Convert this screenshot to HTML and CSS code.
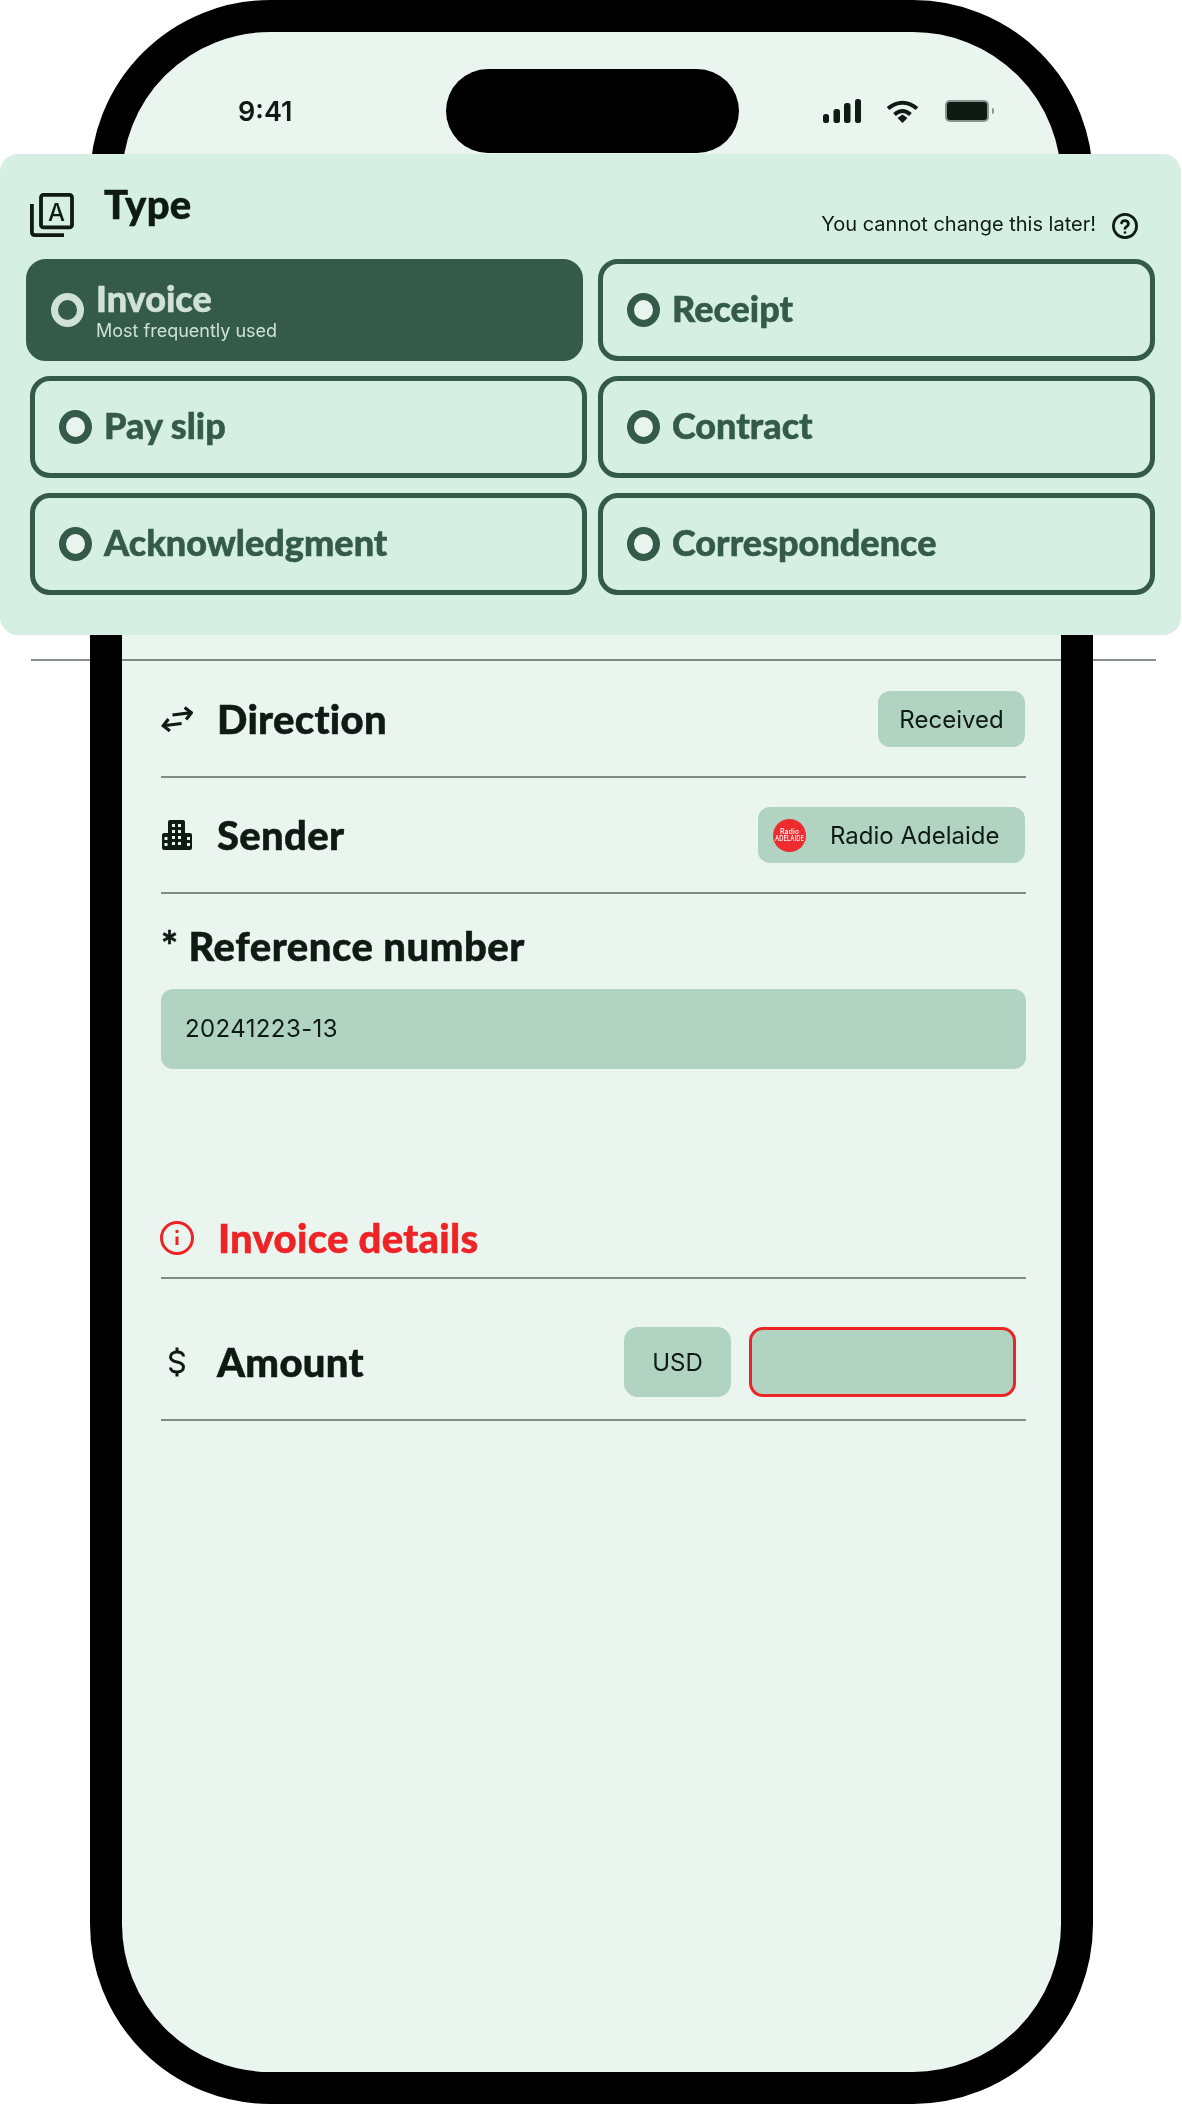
FILE: index.html
```html
<!DOCTYPE html>
<html lang="en">
<head>
    <meta charset="UTF-8">
    <meta name="viewport" content="width=device-width, initial-scale=1.0">
    <title>New document</title>
    <link rel="stylesheet" href="styles.css">
</head>
<body>
    <div class="phone">
        <div class="status-bar">
            <span class="time">9:41</span>
            <div class="notch"></div>
            <div class="status-icons">
                <svg class="signal" width="38" height="24" viewBox="0 0 38 24">
                    <rect x="0" y="15" width="6" height="9" rx="2.5"/>
                    <rect x="10.500" y="10" width="6.500" height="14" rx="2.5"/>
                    <rect x="21" y="4" width="6.500" height="20" rx="2.5"/>
                    <rect x="32" y="0" width="6" height="24" rx="2.5"/>
                </svg>
                <svg class="wifi" width="33" height="23" viewBox="0 0 33 23">
                    <path d="M2 8.500Q16.500 -3 31 8.500M8.500 14.500Q16.500 7.500 24.500 14.500" fill="none" stroke="#0f1a15" stroke-width="4"/>
                    <path d="M11.500 18L16.500 14.500L21.500 18L16.500 23Z" fill="#0f1a15"/>
                </svg>
                <div class="battery"><div class="battery-fill"></div></div>
                <div class="battery-cap"></div>
            </div>
        </div>

        <div class="form">
            <div class="row">
                <svg class="row-icon" width="32" height="26" viewBox="0 0 32 26" fill="none" stroke="#0f1a15" stroke-width="3.200">
                    <g transform="rotate(-7 16 13)">
                        <path d="M12 8.500H31M25 2.500L31 8.500L25 14.500"/>
                        <path d="M20 18H1.500M7.500 12L1.500 18L7.500 24"/>
                    </g>
                </svg>
                <h2 class="row-title">Direction</h2>
                <div class="chip chip-received">Received</div>
            </div>
            <div class="row">
                <svg class="row-icon" width="32" height="30" viewBox="0 0 32 30">
                    <path d="M9 0H22Q24 0 24 2V13H29Q31 13 31 15V28Q31 30 29 30H3Q1 30 1 28V15Q1 13 3 13H7V2Q7 0 9 0Z" fill="#0f1a15"/>
                    <g fill="#ebf5f0">
                        <rect x="11" y="4" width="3" height="3"/><rect x="17" y="4" width="3" height="3"/>
                        <rect x="11" y="10" width="3" height="3"/><rect x="17" y="10" width="3" height="3"/>
                        <rect x="11" y="16" width="3" height="3"/><rect x="17" y="16" width="3" height="3"/>
                        <rect x="11" y="22" width="3" height="3"/><rect x="17" y="22" width="3" height="3"/>
                        <rect x="3.500" y="17" width="3" height="3"/><rect x="26" y="17" width="3" height="3"/>
                        <rect x="3.500" y="23" width="3" height="3"/><rect x="26" y="23" width="3" height="3"/>
                    </g>
                </svg>
                <h2 class="row-title">Sender</h2>
                <div class="chip chip-sender">
                    <svg class="logo" width="33" height="33" viewBox="0 0 33 33">
                        <circle cx="16.500" cy="16.500" r="16.500" fill="#ee2b2e"/>
                        <text class="logo-text" x="16.500" y="15" text-anchor="middle" font-size="7">Radio</text>
                        <text class="logo-text" x="16.500" y="22" text-anchor="middle" font-size="7" textLength="29" lengthAdjust="spacingAndGlyphs">ADELAIDE</text>
                    </svg>
                    <span>Radio Adelaide</span>
                </div>
            </div>

            <h2 class="ref-title">* Reference number</h2>
            <div class="text-field">20241223-13</div>

            <div class="section-head">
                <svg class="info-icon" width="34" height="34" viewBox="0 0 34 34" fill="none" stroke="#ee2326" stroke-width="3">
                    <circle cx="17" cy="17" r="15.500"/>
                    <path d="M17 15.500V24"/>
                    <circle cx="17" cy="10.500" r="1" fill="#ee2326" stroke-width="1.500"/>
                </svg>
                <h2 class="row-title section-title">Invoice details</h2>
            </div>

            <div class="row row-amount">
                <svg class="row-icon" width="32" height="30" viewBox="-8 0 32 30" fill="none" stroke="#0f1a15" stroke-width="3">
                    <path d="M14.500 9.500C14.500 6.500 11.500 5 8 5C4 5 1.500 7 1.500 10C1.500 13.500 4.500 14.300 8 15C11.500 15.700 14.500 16.500 14.500 20C14.500 23 12 25 8 25C4.500 25 1.500 23.500 1.500 20.500"/>
                    <path d="M8 0.500V5M8 25V29.500"/>
                </svg>
                <h2 class="row-title">Amount</h2>
                <div class="chip chip-currency">USD</div>
                <div class="amount-input"></div>
            </div>
        </div>
    </div>

    <div class="sheet-rule"></div>

    <div class="sheet">
        <div class="sheet-head">
            <svg class="type-icon" width="44" height="44" viewBox="0 0 44 44" fill="none" stroke="#0f1a15" stroke-width="3.800">
                <rect x="11" y="1.900" width="31" height="32.500" rx="2.500"/>
                <path d="M1.900 11V39Q1.900 42.100 5 42.100H34"/>
                <text class="type-icon-letter" x="26.500" y="27.500" text-anchor="middle" font-size="24">A</text>
            </svg>
            <h2 class="sheet-title">Type</h2>
            <div class="sheet-note">
                <span>You cannot change this later!</span>
                <svg width="26" height="26" viewBox="0 0 24 24" fill="none" stroke="#0f1a15" stroke-width="2.500" stroke-linecap="round">
                    <circle cx="12" cy="12" r="10.700"/>
                    <path d="M8.800 9.200a3.300 3.300 0 0 1 6.400 1c0 2.200-3.200 2.800-3.200 4"/>
                    <path d="M12 18h.01"/>
                </svg>
            </div>
        </div>
        <div class="type-grid">
            <div class="type-card selected">
                <div class="radio"></div>
                <div>
                    <div class="type-name">Invoice</div>
                    <div class="type-sub">Most frequently used</div>
                </div>
            </div>
            <div class="type-card"><div class="radio"></div><div class="type-name">Receipt</div></div>
            <div class="type-card"><div class="radio"></div><div class="type-name">Pay slip</div></div>
            <div class="type-card"><div class="radio"></div><div class="type-name">Contract</div></div>
            <div class="type-card"><div class="radio"></div><div class="type-name">Acknowledgment</div></div>
            <div class="type-card"><div class="radio"></div><div class="type-name">Correspondence</div></div>
        </div>
    </div>
</body>
</html>
```

FILE: styles.css
```css
body {
    margin: 0;
    background-color: #fff;
    color: #0f1a15;
    font-family: Inter, "Liberation Sans", sans-serif;
    position: relative;
}
h2 {
    margin: 0;
}
svg {
    display: block;
    flex-shrink: 0;
}
.signal {
    fill: #0f1a15;
}
.phone {
    box-sizing: border-box;
    width: 1003px;
    height: 2104px;
    margin-left: 90px;
    padding-top: 37px;
    border: 32px solid #000;
    border-radius: 180px;
    background-color: #ebf5f0;
}
.status-bar {
    display: flex;
    align-items: center;
    height: 84px;
    padding-left: 116px;
}
.time {
    width: 208px;
    font-size: 27px;
    font-weight: 600;
}
.notch {
    width: 293px;
    height: 84px;
    border-radius: 42px;
    background-color: #000;
}
.status-icons {
    display: flex;
    align-items: center;
    margin-left: 84px;
}
.wifi {
    margin-left: 25px;
}
.battery {
    box-sizing: border-box;
    width: 44px;
    height: 22px;
    margin-left: 26px;
    padding: 2px;
    border-radius: 5px;
    background-color: #86958d;
}
.battery-fill {
    height: 100%;
    border-radius: 3px;
    background-color: #0f1a15;
}
.battery-cap {
    width: 2px;
    height: 6px;
    margin-left: 3px;
    border-radius: 0 3px 3px 0;
    background-color: #86958d;
}

/* form under the sheet */
.form {
    margin-top: 509px;
    padding: 0 35px 0 39px;
}
.row {
    display: flex;
    align-items: center;
    padding: 29px 0;
    border-bottom: 2px solid #7f8c84;
}
.row-icon {
    margin-right: 24px;
}
.info-icon {
    margin: 0 24px 0 -1px;
}
.row-title,
.ref-title,
.sheet-title {
    font-family: Lato, sans-serif;
    font-size: 40px;
    font-weight: 900;
    line-height: 48px;
    letter-spacing: 0.3px;
    -webkit-text-stroke: 0.5px currentColor;
}
.row-title {
    flex: 1;
}
.chip {
    display: flex;
    align-items: center;
    justify-content: center;
    height: 56px;
    margin-right: 1px;
    border-radius: 12px;
    background-color: #b0d3c2;
    font-size: 24px;
}
.chip-received {
    width: 147px;
}
.chip-sender {
    justify-content: flex-start;
    box-sizing: border-box;
    width: 267px;
    padding-left: 15px;
    gap: 24px;
}
.logo-text {
    fill: #fff;
    font-family: Inter, sans-serif;
    font-weight: 500;
}
.ref-title {
    margin-top: 28px;
    letter-spacing: 0.5px;
}
.text-field {
    box-sizing: border-box;
    height: 80px;
    margin-top: 19px;
    padding: 0 24px;
    border-radius: 12px;
    background-color: #b0d3c2;
    font-size: 24px;
    line-height: 80px;
    letter-spacing: 0.4px;
}
.section-head {
    display: flex;
    align-items: center;
    margin-top: 145px;
    padding-bottom: 15px;
    border-bottom: 2px solid #7f8c84;
}
.section-title {
    color: #ee2326;
}
.row-amount {
    padding: 48px 10px 22px 0;
}
.chip-currency {
    width: 107px;
    height: 70px;
    margin-right: 0;
    border-radius: 14px;
}
.amount-input {
    box-sizing: border-box;
    width: 267px;
    height: 70px;
    margin-left: 18px;
    border: 3px solid #ee2326;
    border-radius: 14px;
    background-color: #b0d3c2;
}

/* rule runs under the frame and past it, multiply keeps it out of the black */
.sheet-rule {
    position: absolute;
    top: 659px;
    left: 31px;
    width: 1125px;
    height: 2px;
    background-color: #878f8a;
    mix-blend-mode: multiply;
}

/* type picker, hangs over the phone */
.sheet {
    position: absolute;
    top: 154px;
    left: 0;
    box-sizing: border-box;
    width: 1181px;
    height: 481px;
    padding: 0 0 0 30px;
    border-radius: 18px;
    background-color: #d5f0e2;
}
.sheet-head {
    display: flex;
    height: 105px;
}
.type-icon {
    margin-top: 39px;
    margin-right: 30px;
}
.type-icon-letter {
    fill: #0f1a15;
    stroke: none;
    font-family: Inter, sans-serif;
    font-weight: 500;
}
.sheet-title {
    flex: 1;
    margin-top: 26px;
}
.sheet-note {
    display: flex;
    align-items: center;
    gap: 16px;
    height: 26px;
    margin-top: 59px;
    margin-right: 43px;
    font-size: 20px;
}
.sheet-note span {
    margin-bottom: 5px;
}
.type-grid {
    display: grid;
    grid-template-columns: 557px 557px;
    grid-auto-rows: 102px;
    column-gap: 11px;
    row-gap: 15px;
}
.type-card {
    box-sizing: border-box;
    display: flex;
    align-items: center;
    gap: 12px;
    padding-left: 24px;
    border: 5px solid #345b4a;
    border-radius: 20px;
    color: #345b4a;
}
.type-card.selected {
    margin: 0 4px 0 -4px;
    padding-left: 20px;
    background-color: #345b4a;
    color: #d0e1d8;
}
.radio {
    box-sizing: border-box;
    width: 33px;
    height: 34px;
    border: 7px solid #345b4a;
    border-radius: 50%;
    background-color: #eaf4ef;
}
.selected .radio {
    border-color: #d0e1d8;
    background-color: #345b4a;
}
.type-name {
    padding-bottom: 4px;
    font-family: Lato, sans-serif;
    font-size: 36px;
    font-weight: 900;
    line-height: 42px;
    -webkit-text-stroke: 0.5px currentColor;
}
.selected .type-name {
    padding-bottom: 0;
    line-height: 36px;
}
.type-sub {
    margin: 3px 0 -3px;
    font-size: 18px;
    line-height: 24px;
}
```
